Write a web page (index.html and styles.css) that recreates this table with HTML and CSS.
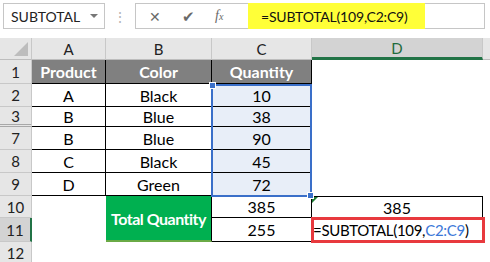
FILE: index.html
```html
<!DOCTYPE html>
<html lang="en">
<head>
  <meta charset="UTF-8" />
  <title>SUBTOTAL</title>
  <link rel="stylesheet" href="styles.css">
</head>
<body>
  <div class="bar">
    <div class="namebox">SUBTOTAL<span class="caret"></span></div>
    <div class="grip">&#8942;</div>
    <div class="fbox">
      <div class="btns">
        <span class="btn">&#x2715;</span>
        <span class="btn check">&#x2714;</span>
        <span class="btn fx">f<small>x</small></span>
      </div>
      <div class="formula"><span class="mark">=SUBTOTAL(109,C2:C9)</span></div>
    </div>
  </div>

  <div class="sheet">
    <div class="row head">
      <div class="corner"></div>
      <div class="ch ca">A</div>
      <div class="ch cb">B</div>
      <div class="ch cc">C</div>
      <div class="ch cd sel">D</div>
      <div class="ch ce"></div>
    </div>

    <div class="row r1">
      <div class="rh">1</div>
      <div class="c ca th">Product</div>
      <div class="c cb th">Color</div>
      <div class="c cc th">Quantity</div>
      <div class="c cd"></div>
    </div>
    <div class="row r2">
      <div class="rh">2</div>
      <div class="c ca t">A</div>
      <div class="c cb t">Black</div>
      <div class="c cc t q">10</div>
      <div class="c cd"></div>
    </div>
    <div class="row r3">
      <div class="rh hidden-after">3</div>
      <div class="c ca t">B</div>
      <div class="c cb t">Blue</div>
      <div class="c cc t q">38</div>
      <div class="c cd"></div>
    </div>
    <div class="row r7">
      <div class="rh">7</div>
      <div class="c ca t">B</div>
      <div class="c cb t">Blue</div>
      <div class="c cc t q">90</div>
      <div class="c cd"></div>
    </div>
    <div class="row r8">
      <div class="rh">8</div>
      <div class="c ca t">C</div>
      <div class="c cb t">Black</div>
      <div class="c cc t q">45</div>
      <div class="c cd"></div>
    </div>
    <div class="row r9">
      <div class="rh">9</div>
      <div class="c ca t">D</div>
      <div class="c cb t">Green</div>
      <div class="c cc t q">72</div>
      <div class="c cd"></div>
    </div>

    <div class="pair">
      <div class="rhs">
        <div class="rh r10">10</div>
        <div class="rh r11 sel">11</div>
      </div>
      <div class="c ca blank"></div>
      <div class="c cb total">Total Quantity</div>
      <div class="cols">
        <div class="row r10">
          <div class="c cc t">385</div>
          <div class="c cd t res">385</div>
        </div>
        <div class="row r11">
          <div class="c cc t">255</div>
          <div class="c cd t active">=SUBTOTAL(109,<span class="ref">C2:C9</span>)</div>
        </div>
      </div>
    </div>

    <div class="row r12">
      <div class="rh">12</div>
    </div>

    <!-- reference range C2:C9 -->
    <div class="range">
      <span class="knob tl"></span>
      <span class="knob br"></span>
    </div>
  </div>
</body>
</html>
```

FILE: styles.css
```css
* {
  box-sizing: border-box;
}
body {
  margin: 0;
  width: 490px;
  height: 262px;
  overflow: hidden;
  background: #fff;
  font-family: Lato, "Liberation Sans", sans-serif;
  color: #000;
}

/* formula bar */
.bar {
  display: flex;
  align-items: center;
  height: 32px;
  padding: 3px 5px 3px 3px;
}
.namebox {
  display: flex;
  align-items: center;
  justify-content: space-between;
  width: 102px;
  height: 26px;
  border: 1px solid #c6c6c6;
  padding: 0 6px 0 7px;
  font-size: 14px;
  color: #222;
}
.caret {
  width: 0;
  height: 0;
  border-left: 4px solid transparent;
  border-right: 4px solid transparent;
  border-top: 4px solid #777;
}
.grip {
  width: 30px;
  text-align: center;
  color: #b4b4b4;
  font-size: 14px;
}
.fbox {
  flex: 1;
  display: flex;
  height: 26px;
  border: 1px solid #c6c6c6;
}
.btns {
  display: flex;
  align-items: center;
  width: 112px;
  padding-left: 13px;
}
.btn {
  width: 35px;
  color: #6a6a6a;
  font-size: 14px;
}
.check {
  font-size: 15px;
}
.fx {
  font-family: "Liberation Serif", serif;
  font-style: italic;
  font-size: 14px;
}
.fx small {
  font-size: 10px;
}
.formula {
  flex: 1;
  display: flex;
}
.mark {
  display: flex;
  align-items: center;
  width: 177px;
  margin-top: -1px;
  margin-bottom: -1px;
  padding-left: 13px;
  background: #ffff38;
  font-size: 14px;
  letter-spacing: -0.2px;
  color: #111;
}

/* grid */
.sheet {
  position: relative;
  margin-top: 6px;
}
.row {
  display: flex;
}
.head {
  height: 22px;
}
.corner {
  position: relative;
  width: 32px;
  background: #e6e6e6;
  border-right: 1px solid #c8c8c8;
  border-bottom: 1px solid #bdbdbd;
}
.corner::after {
  content: "";
  position: absolute;
  right: 3px;
  bottom: 3px;
  border-left: 14px solid transparent;
  border-bottom: 14px solid #bdbdbd;
}
.ch {
  display: flex;
  align-items: center;
  justify-content: center;
  background: #e6e6e6;
  border-right: 1px solid #c8c8c8;
  border-bottom: 1px solid #bdbdbd;
  font-size: 15px;
  color: #222;
}
.ch.sel {
  background: #d3d3d3;
  border-bottom: 3px solid #217346;
  color: #1e6b3c;
}
.ch.ce {
  flex: 1;
  border-right: none;
}
.ca { width: 74px; }
.cb { width: 106px; }
.cc { width: 100px; }
.cd { width: 171px; }

.rh {
  display: flex;
  align-items: center;
  justify-content: center;
  width: 32px;
  background: #e6e6e6;
  border-right: 1px solid #c8c8c8;
  border-bottom: 1px solid #c8c8c8;
  font-size: 15px;
  color: #222;
}
.rh.sel {
  background: #d3d3d3;
  border-right: 2px solid #217346;
}
.rh.hidden-after {
  border-bottom: 3px double #a8a8a8;
}

.r1 { height: 24px; }
.r2 { height: 23px; }
.r3 { height: 20px; }
.r7 { height: 23px; }
.r8 { height: 23px; }
.r9 { height: 23px; }
.r10 { height: 22px; }
.r11 { height: 24px; }
.r12 { height: 22px; }

.c {
  display: flex;
  align-items: center;
  justify-content: center;
  font-size: 16px;
}
.t {
  border-right: 1px solid #000;
  border-bottom: 1px solid #000;
}
.th {
  background: #808080;
  color: #fff;
  font-weight: bold;
  border-right: 1px solid #000;
  border-bottom: 1px solid #000;
}
.q {
  background: #e8eef8;
}

/* rows 10-11 with the merged total cell */
.pair {
  display: flex;
  height: 46px;
}
.rhs {
  display: flex;
  flex-direction: column;
}
.cols {
  display: flex;
  flex-direction: column;
}
.blank {
  border-right: none;
}
.total {
  background: #00b050;
  color: #fff;
  font-weight: bold;
  font-size: 16px;
  letter-spacing: -0.5px;
  white-space: nowrap;
  border-right: 1px solid #000;
  border-bottom: 2px solid #6aaa46;
}
.res {
  position: relative;
  border-top: 1px solid #000;
}
.res::before {
  content: "";
  position: absolute;
  left: 0;
  top: 0;
  border-top: 6px solid #1e7b34;
  border-right: 6px solid transparent;
}
.active {
  position: relative;
  justify-content: flex-start;
  white-space: nowrap;
  padding-left: 1px;
  font-size: 15px;
  letter-spacing: -0.3px;
}
.active::after {
  content: "";
  position: absolute;
  left: -1px;
  top: -1px;
  right: -3px;
  bottom: -2px;
  border: 3px solid #e8393e;
}
.ref {
  color: #3c78d8;
}

/* selection outline over C2:C9 */
.range {
  position: absolute;
  left: 211px;
  top: 46px;
  width: 101px;
  height: 113px;
  border: 2px solid #3a6fc9;
  pointer-events: none;
}
.knob {
  position: absolute;
  width: 7px;
  height: 7px;
  background: #3a6fc9;
  border: 1px solid #fff;
}
.knob.tl {
  left: -4px;
  top: -4px;
}
.knob.br {
  right: -4px;
  bottom: -4px;
}
```
